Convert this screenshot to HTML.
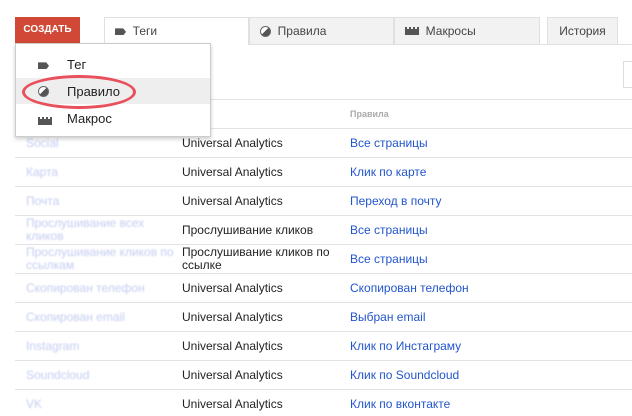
<!DOCTYPE html>
<html><head><meta charset="utf-8"><style>
body{margin:0;width:632px;height:416px;background:#fff;font-family:"Liberation Sans",Arial,sans-serif;position:relative;overflow:hidden;font-size:12px;color:#222}
.a{position:absolute}
.btn{left:15px;top:17px;width:65px;height:26px;background:#d14836;color:#fff;font-weight:bold;font-size:10px;line-height:26px;text-align:center}
.tab{top:17px;height:27px;border:1px solid #e0e0e0;border-bottom:none;background:#f2f2f2;box-sizing:border-box;line-height:27px;font-size:12px;color:#444}
.line{left:15px;right:0;height:1px;background:#e2e2e2}
.c1{left:26px;color:#c4cdf0;filter:blur(0.7px)}
.c2{left:182px}
.c3{left:350px;color:#2255cc}
.tag{display:inline-block;width:11px;height:7px;background:#555;clip-path:polygon(0 0,75% 0,100% 50%,75% 100%,0 100%);vertical-align:middle}
.mac{display:inline-block;width:14px;height:6px;background:#555;vertical-align:middle;position:relative}
.mac:before{content:"";position:absolute;top:-2px;left:0;width:14px;height:2px;background:repeating-linear-gradient(90deg,#555 0 2px,transparent 2px 4px)}
.rule{display:inline-block;width:9px;height:9px;border:1px solid #666;border-radius:50%;vertical-align:middle;background:linear-gradient(135deg,#fff 45%,#555 45%)}
</style></head><body>
<div class="a btn">СОЗДАТЬ</div>
<div class="a" style="left:104px;right:0;top:44px;height:1px;background:#e0e0e0"></div>
<div class="a tab" style="left:104px;width:145px;background:#fff;height:28px;padding-left:10px"><span class="tag"></span>&nbsp; Теги</div>
<div class="a tab" style="left:249px;width:145px;padding-left:10px"><span class="rule"></span>&nbsp; Правила</div>
<div class="a tab" style="left:394px;width:146px;padding-left:10px"><span class="mac"></span>&nbsp; Макросы</div>
<div class="a tab" style="left:547px;width:71px;text-align:center">История</div>
<div class="a" style="left:623px;top:61px;width:20px;height:25px;border:1px solid #ddd"></div>
<div class="a line" style="top:99px"></div>
<div class="a" style="left:350px;top:109px;font-size:9px;font-weight:bold;color:#aaa">Правила</div>
<div class="a line" style="top:128px"></div>
<div class="a line" style="top:157px"></div>
<div class="a line" style="top:186px"></div>
<div class="a line" style="top:215px"></div>
<div class="a line" style="top:244px"></div>
<div class="a line" style="top:273px"></div>
<div class="a line" style="top:302px"></div>
<div class="a line" style="top:331px"></div>
<div class="a line" style="top:360px"></div>
<div class="a line" style="top:389px"></div>
<div class="a c1" style="top:136px">Social</div><div class="a c2" style="top:136px">Universal Analytics</div><div class="a c3" style="top:136px">Все страницы</div>
<div class="a c1" style="top:165px">Карта</div><div class="a c2" style="top:165px">Universal Analytics</div><div class="a c3" style="top:165px">Клик по карте</div>
<div class="a c1" style="top:194px">Почта</div><div class="a c2" style="top:194px">Universal Analytics</div><div class="a c3" style="top:194px">Переход в почту</div>
<div class="a c1" style="top:217px;line-height:13px">Прослушивание всех<br>кликов</div><div class="a c2" style="top:223px">Прослушивание кликов</div><div class="a c3" style="top:223px">Все страницы</div>
<div class="a c1" style="top:246px;line-height:13px">Прослушивание кликов по<br>ссылкам</div><div class="a c2" style="top:246px;line-height:13px">Прослушивание кликов по<br>ссылке</div><div class="a c3" style="top:252px">Все страницы</div>
<div class="a c1" style="top:281px">Скопирован телефон</div><div class="a c2" style="top:281px">Universal Analytics</div><div class="a c3" style="top:281px">Скопирован телефон</div>
<div class="a c1" style="top:310px">Скопирован email</div><div class="a c2" style="top:310px">Universal Analytics</div><div class="a c3" style="top:310px">Выбран email</div>
<div class="a c1" style="top:339px">Instagram</div><div class="a c2" style="top:339px">Universal Analytics</div><div class="a c3" style="top:339px">Клик по Инстаграму</div>
<div class="a c1" style="top:368px">Soundcloud</div><div class="a c2" style="top:368px">Universal Analytics</div><div class="a c3" style="top:368px">Клик по Soundcloud</div>
<div class="a c1" style="top:397px">VK</div><div class="a c2" style="top:397px">Universal Analytics</div><div class="a c3" style="top:397px">Клик по вконтакте</div>
<div class="a" style="left:15px;top:43px;width:194px;height:92px;background:#fff;border:1px solid #ccc;box-shadow:0 2px 4px rgba(0,0,0,.2)">
 <div class="a" style="left:0;right:0;top:34px;height:26px;background:#eee"></div>
 <div class="a" style="left:22px;top:14px"><span class="tag"></span></div><div class="a" style="left:51px;top:13px;font-size:13px">Тег</div>
 <div class="a" style="left:22px;top:40px"><span class="rule"></span></div><div class="a" style="left:51px;top:40px;font-size:13px">Правило</div>
 <div class="a" style="left:22px;top:70px"><span class="mac"></span></div><div class="a" style="left:51px;top:67px;font-size:13px">Макрос</div>
</div>
<div class="a" style="left:22px;top:75px;width:108px;height:28px;border:3px solid #e8505b;border-radius:50%"></div>
</body></html>
